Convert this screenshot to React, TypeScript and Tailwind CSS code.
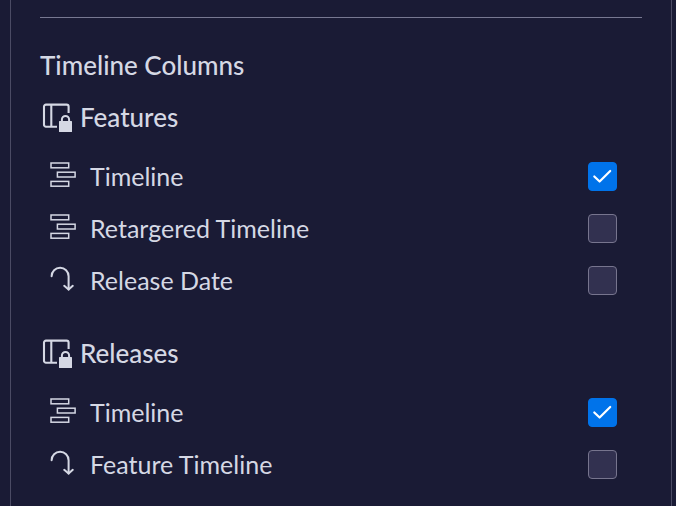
import { FC } from "react";

interface IconProps {
  className?: string;
}

interface Column {
  id: string;
  label: string;
  icon: FC<IconProps>;
  checked: boolean;
}

interface Group {
  title: string;
  columns: Column[];
}

const LockedPanelIcon: FC<IconProps> = ({ className }) => (
  <svg viewBox="0 0 30 30" fill="none" className={className} aria-hidden="true">
    <path
      d="M15 24.7H4A2 2 0 0 1 2 22.7V4.6a2 2 0 0 1 2-2H24.6a2 2 0 0 1 2 2V11M9.3 2.6v22"
      stroke="currentColor"
      strokeWidth="2.1"
    />
    <path
      d="M19.9 20v-2.4a3.6 3.6 0 0 1 7.2 0V20"
      stroke="currentColor"
      strokeWidth="2"
    />
    <rect x="17" y="19" width="13" height="11" rx="0.5" fill="currentColor" />
  </svg>
);

const TimelineIcon: FC<IconProps> = ({ className }) => (
  <svg
    viewBox="0 0 28 28"
    fill="none"
    stroke="currentColor"
    strokeWidth="1.5"
    className={className}
    aria-hidden="true"
  >
    <rect x="1" y="1" width="17.7" height="4.8" />
    <rect x="7.4" y="10.2" width="17.7" height="4.8" />
    <rect x="1" y="19.4" width="17.7" height="4.8" />
  </svg>
);

const ArrowIcon: FC<IconProps> = ({ className }) => (
  <svg
    viewBox="0 0 28 28"
    fill="none"
    stroke="currentColor"
    strokeWidth="2"
    strokeLinecap="round"
    strokeLinejoin="round"
    className={className}
    aria-hidden="true"
  >
    <path d="M1.6 10.2a8.5 8.5 0 0 1 17 0v13.3" />
    <path d="M14.2 19.8l4.4 3.8 4.2-3.8" />
  </svg>
);

const groups: Group[] = [
  {
    title: "Features",
    columns: [
      { id: "features-timeline", label: "Timeline", icon: TimelineIcon, checked: true },
      { id: "features-retargeted", label: "Retargered Timeline", icon: TimelineIcon, checked: false },
      { id: "features-release-date", label: "Release Date", icon: ArrowIcon, checked: false },
    ],
  },
  {
    title: "Releases",
    columns: [
      { id: "releases-timeline", label: "Timeline", icon: TimelineIcon, checked: true },
      { id: "releases-feature", label: "Feature Timeline", icon: ArrowIcon, checked: false },
    ],
  },
];

const ColumnRow: FC<{ column: Column }> = ({ column }) => {
  const Icon = column.icon;
  return (
    <li className="flex h-[52px] items-center pr-[25px] pl-[10px]">
      <Icon className="mr-3 h-7 w-7 shrink-0" />
      <label htmlFor={column.id} className="flex-1 text-[25px] leading-8">
        {column.label}
      </label>
      <span className="grid h-[29px] w-[29px] shrink-0">
        <input
          id={column.id}
          type="checkbox"
          defaultChecked={column.checked}
          className="peer col-start-1 row-start-1 appearance-none rounded-[4px] border border-[#77758e] bg-[#323150] checked:border-[#0073ea] checked:bg-[#0073ea]"
        />
        <svg
          viewBox="0 0 29 29"
          fill="none"
          stroke="white"
          strokeWidth="2.2"
          strokeLinecap="round"
          strokeLinejoin="round"
          className="pointer-events-none invisible col-start-1 row-start-1 peer-checked:visible"
          aria-hidden="true"
        >
          <path d="M6.3 14.5l5.3 5L22.2 9" />
        </svg>
      </span>
    </li>
  );
};

export default function App() {
  return (
    <div className="min-h-screen bg-[#1a1b35] pr-1 pl-[10px] font-['Lato',sans-serif] text-[#d5d8e4]">
      <main className="min-h-screen border-x border-[#4b4b64] px-[29px] pt-[17px]">
        <hr className="border-[#777891]" />
        <h1 className="mt-[21px] flex h-[52px] items-center text-[26px] leading-8 font-medium">
          Timeline Columns
        </h1>
        <div className="flex flex-col gap-[21px]">
          {groups.map((group) => (
            <section key={group.title}>
              <h2 className="flex h-[52px] items-center gap-2 pl-[2px] text-[26px] leading-8 font-medium">
                <LockedPanelIcon className="h-[30px] w-[30px] shrink-0" />
                {group.title}
              </h2>
              <ul className="mt-[7px]">
                {group.columns.map((column) => (
                  <ColumnRow key={column.id} column={column} />
                ))}
              </ul>
            </section>
          ))}
        </div>
      </main>
    </div>
  );
}
